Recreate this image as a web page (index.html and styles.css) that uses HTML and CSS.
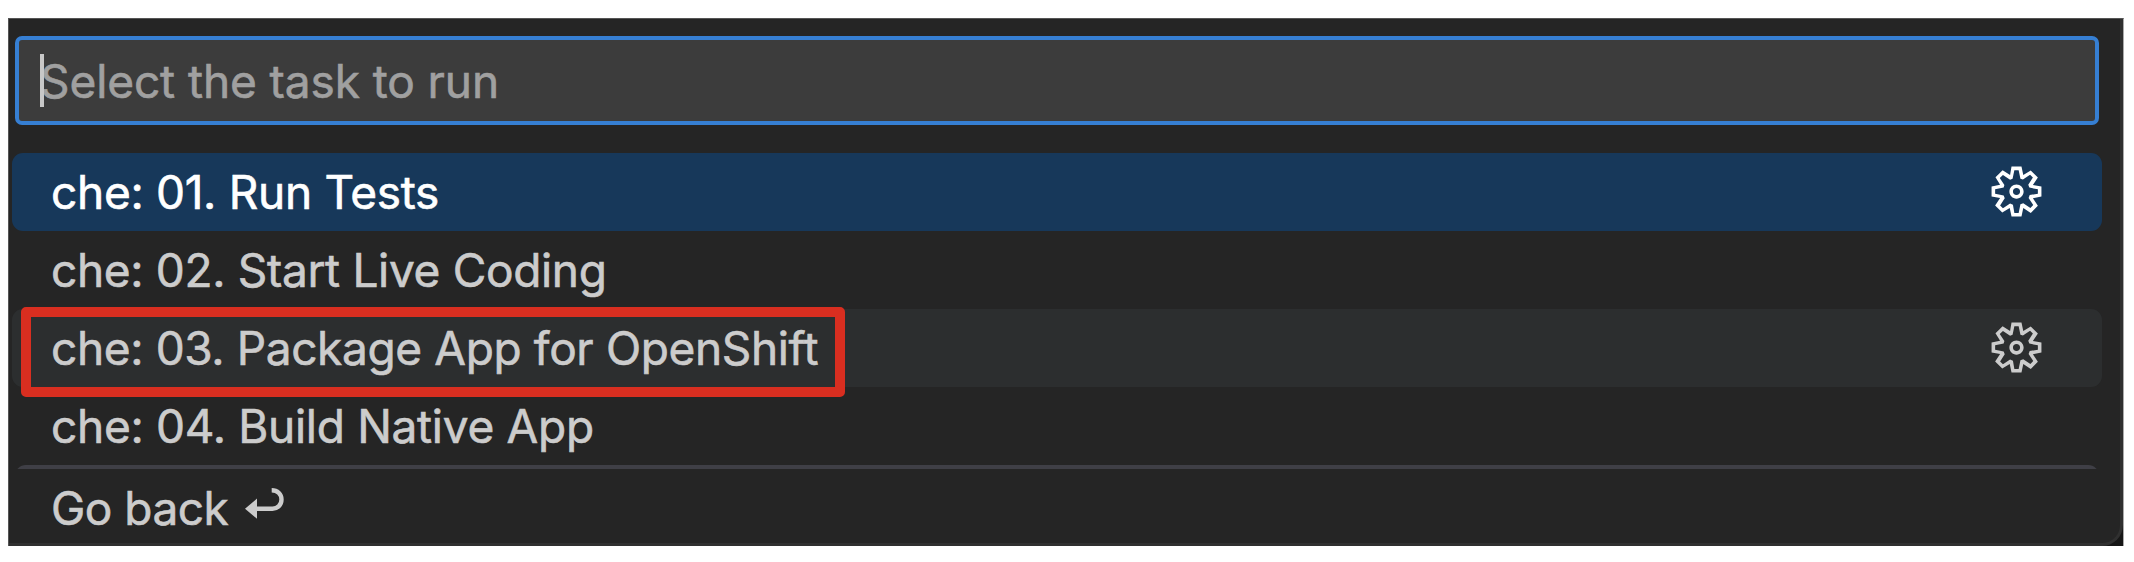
FILE: index.html
```html
<!DOCTYPE html>
<html lang="en">
<head>
<meta charset="utf-8">
<title>Select the task to run</title>
<link rel="stylesheet" href="styles.css">
</head>
<body>
<svg width="0" height="0" class="defs"><symbol id="gear" viewBox="0 0 16 16"><path fill-rule="evenodd" d="M9.1 4.4L8.6 2H7.4l-.5 2.4-.7.3-2-1.3-.9.8 1.3 2-.2.7-2.4.5v1.2l2.4.5.3.8-1.3 2 .8.8 2-1.3.8.3.4 2.3h1.2l.5-2.4.8-.3 2 1.3.8-.8-1.3-2 .3-.8 2.3-.4V7.4l-2.4-.5-.3-.8 1.3-2-.8-.8-2 1.3-.7-.2zM9.4 1l.5 2.4L12 2.1l2 2-1.4 2.1 2.4.4v2.8l-2.4.5L14 12l-2 2-2.1-1.4-.5 2.4H6.6l-.5-2.4L4 13.9l-2-2 1.4-2.1L1 9.4V6.6l2.4-.5L2.1 4l2-2 2.1 1.4.4-2.4h2.8zm.6 7c0 1.1-.9 2-2 2s-2-.9-2-2 .9-2 2-2 2 .9 2 2zM8 9c.6 0 1-.4 1-1s-.4-1-1-1-1 .4-1 1 .4 1 1 1z"/></symbol></svg>
<main class="frame">
  <div class="picker">
    <div class="input"><span class="caret"></span><span class="placeholder">Select the task to run</span></div>
    <div class="list">
      <div class="row selected"><span class="label l1">che: 01. Run Tests</span><svg class="gear"><use href="#gear"/></svg></div>
      <div class="row"><span class="label l2">che: 02. Start Live Coding</span></div>
      <div class="row hover"><span class="label l3">che: 03. Package App for OpenShift</span><svg class="gear"><use href="#gear"/></svg><span class="marker"></span></div>
      <div class="row"><span class="label l4">che: 04. Build Native App</span></div>
      <div class="row back"><span class="label l5">Go back</span><svg class="return" viewBox="0 0 42 26"><path d="M2 13.7L14 3.6v20.2z" fill="currentColor"/><path d="M12 13.7h17.5c5 0 9-3.7 9-9.2s-4-9.2-9.8-9.2" fill="none" stroke="currentColor" stroke-width="4.4"/></svg></div>
    </div>
  </div>
</main>
</body>
</html>
```
FILE: styles.css
```css
body {
  margin: 0;
  padding: 18px 10px 16px 8px;
  width: 2116px;
  height: 528px;
  background: #fff;
  font-family: Inter, "Liberation Sans", sans-serif;
  overflow: hidden;
}
.defs { display: none; }
.frame {
  box-sizing: border-box;
  height: 528px;
  border: 1px solid #555;
  border-right-color: #aaa;
  border-bottom: 0;
  background: #161616;
}
.picker {
  box-sizing: border-box;
  height: 527px;
  padding: 17px 0 0 3px;
  border-right: 3px solid #303030;
  border-bottom: 3px solid #303030;
  border-bottom-right-radius: 21px;
  background: #252525;
}
.input {
  position: relative;
  box-sizing: border-box;
  display: flex;
  align-items: center;
  width: 2084px;
  height: 89px;
  margin-left: 3px;
  padding-left: 21px;
  border: 4px solid #367fd3;
  border-radius: 7px;
  background: #3c3c3c;
}
.caret {
  position: absolute;
  left: 21px;
  top: 14px;
  width: 4px;
  height: 53px;
  background: #c8c8c8;
}
.placeholder {
  font-size: 46px;
  line-height: 78px;
  letter-spacing: -0.09px;
  color: #a0a0a0;
  white-space: pre;
  -webkit-text-stroke: 0.6px currentColor;
}
.list { margin-top: 28px; }
.row {
  position: relative;
  box-sizing: border-box;
  display: flex;
  align-items: center;
  width: 2090px;
  height: 78px;
  padding: 0 57px 0 39px;
  border-radius: 11px;
  color: #ccc;
}
.selected { background: #17385a; color: #fff; }
.hover { background: #2c2e2f; }
.label {
  padding-top: 1px;
  font-size: 46px;
  line-height: 77px;
  white-space: pre;
  -webkit-text-stroke: 0.6px currentColor;
}
.l1 { letter-spacing: -0.3px; }
.l2 { letter-spacing: -0.33px; }
.l3 { letter-spacing: -0.37px; }
.l4 { letter-spacing: -0.29px; }
.l5 { letter-spacing: -0.5px; }
.gear { width: 57px; height: 57px; margin: 0 0 1px auto; fill: currentColor; }
.marker {
  position: absolute;
  left: 9px;
  top: -2px;
  box-sizing: border-box;
  width: 824px;
  height: 90px;
  border: 10px solid #d92e20;
  border-radius: 5px;
}
.back {
  width: 2084px;
  height: 81px;
  margin-left: 3px;
  padding: 4px 0 0 36px;
  background: linear-gradient(#3f3f46, #3f3f46) 0 0 / 100% 4px no-repeat;
}
.return { width: 42px; height: 26px; margin-left: 15px; overflow: visible; }
```
